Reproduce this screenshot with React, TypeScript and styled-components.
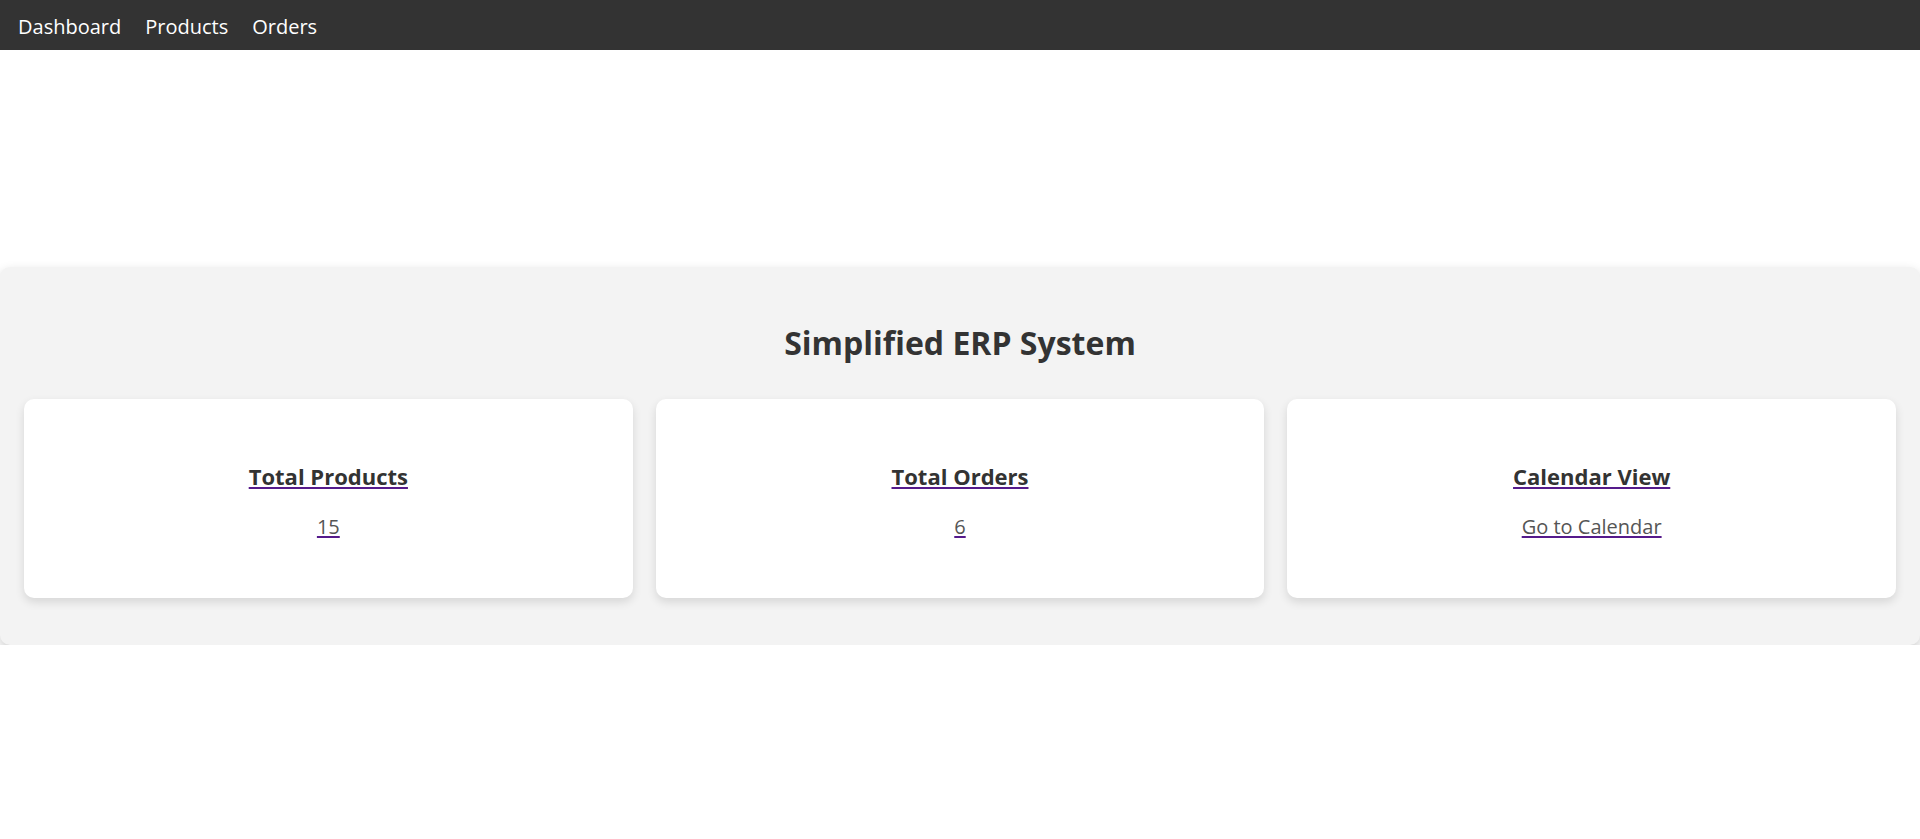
import React from 'react';
import styled, {createGlobalStyle} from "styled-components";

const GlobalStyle = createGlobalStyle`
    * {
        box-sizing: border-box;
    }
    body {
        margin: 0;
        font-family: "Open Sans", "Noto Sans", sans-serif;
        background: #fff;
        color: #333;
    }
`;

type Stat = {
    title: string;
    value: string;
};

const stats: Stat[] = [
    {title: "Total Products", value: "15"},
    {title: "Total Orders", value: "6"},
    {title: "Calendar View", value: "Go to Calendar"},
];

export default function App() {
    return (
        <>
            <GlobalStyle/>
            <Navbar>
                <NavLink href="#">Dashboard</NavLink>
                <NavLink href="#">Products</NavLink>
                <NavLink href="#">Orders</NavLink>
            </Navbar>
            <Dashboard>
                <Title>Simplified ERP System</Title>
                <CardsRow>
                    {stats.map(stat => (
                        <Card href="#" key={stat.title}>
                            <CardTitle>{stat.title}</CardTitle>
                            <CardValue>{stat.value}</CardValue>
                        </Card>
                    ))}
                </CardsRow>
            </Dashboard>
        </>
    );
}

const Navbar = styled.nav`
    height: 50px;
    background: #333;
    display: flex;
    align-items: center;
    gap: 24px;
    padding: 3px 18px 0;
`;

const NavLink = styled.a`
    color: #fff;
    text-decoration: none;
    font-size: 20px;
    line-height: 1;
`;

const Dashboard = styled.section`
    margin-top: 217px;
    background: #f3f3f3;
    border-radius: 10px;
    box-shadow: 0 5px 12px rgba(0, 0, 0, 0.2);
    padding: 54px 24px 47px;
`;

const Title = styled.h1`
    margin: 0 0 35px;
    text-align: center;
    font-size: 32px;
    line-height: 43px;
    font-weight: 700;
    color: #333;
`;

const CardsRow = styled.div`
    display: grid;
    grid-template-columns: repeat(3, 1fr);
    gap: 23px;
`;

const Card = styled.a`
    height: 199px;
    background: #fff;
    border-radius: 10px;
    box-shadow: 0 4px 10px rgba(0, 0, 0, 0.12);
    display: flex;
    flex-direction: column;
    align-items: center;
    padding-top: 64px;
    text-decoration: underline;
    text-decoration-color: #551a8b;
    text-decoration-thickness: 2px;
    text-underline-offset: 2px;
    color: #551a8b;
`;

const CardTitle = styled.h3`
    margin: 0 0 23px;
    font-size: 22px;
    line-height: 27px;
    font-weight: 700;
    color: #333;
`;

const CardValue = styled.p`
    margin: 0;
    font-size: 20px;
    line-height: 27px;
    color: #555;
`;
